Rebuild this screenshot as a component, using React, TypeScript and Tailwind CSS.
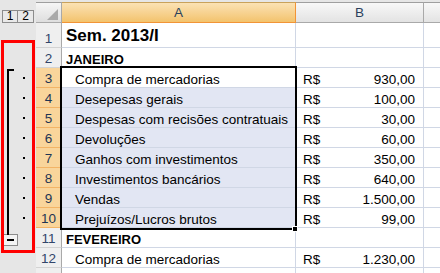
import React from "react";

type Row = {
  n: number;
  a?: string;
  v?: string;
  kind?: "title" | "head" | "item";
  sel?: boolean;
  active?: boolean;
  h: string;
};

const rows: Row[] = [
  { n: 1, a: "Sem. 2013/I", kind: "title", h: "h-[25px]" },
  { n: 2, a: "JANEIRO", kind: "head", h: "h-[20px]" },
  { n: 3, a: "Compra de mercadorias", v: "930,00", kind: "item", sel: true, active: true, h: "h-[20px]" },
  { n: 4, a: "Desepesas gerais", v: "100,00", kind: "item", sel: true, h: "h-[20px]" },
  { n: 5, a: "Despesas com recisões contratuais", v: "30,00", kind: "item", sel: true, h: "h-[20px]" },
  { n: 6, a: "Devoluções", v: "60,00", kind: "item", sel: true, h: "h-[20px]" },
  { n: 7, a: "Ganhos com investimentos", v: "350,00", kind: "item", sel: true, h: "h-[20px]" },
  { n: 8, a: "Investimentos bancários", v: "640,00", kind: "item", sel: true, h: "h-[20px]" },
  { n: 9, a: "Vendas", v: "1.500,00", kind: "item", sel: true, h: "h-[20px]" },
  { n: 10, a: "Prejuízos/Lucros brutos", v: "99,00", kind: "item", sel: true, h: "h-[20px]" },
  { n: 11, a: "FEVEREIRO", kind: "head", h: "h-[20px]" },
  { n: 12, a: "Compra de mercadorias", v: "1.230,00", kind: "item", h: "h-[20px]" },
  { n: 13, h: "h-[20px]" },
];

const SheetRow = ({ row }: { row: Row }) => {
  const aText =
    row.kind === "title"
      ? "pl-[4px] pb-[3px] text-[17px] font-bold"
      : row.kind === "head"
      ? "pl-[4px] pb-[1px] text-[13px] font-bold"
      : "pl-[13px] pb-[1px] text-[13.5px]";

  return (
    <div className={`flex ${row.h}`}>
      {/* outline pane */}
      <div className="w-[36px] bg-[#e6e6e6] flex items-center">
        {row.sel && <div className="ml-[23px] w-[2px] h-[2px] bg-black" />}
        {row.n === 11 && (
          <div className="ml-[2px] mt-[4px] w-[16px] h-[12px] border border-[#8c8c8c] bg-[#f4f4f4] flex items-center justify-center">
            <div className="w-[7px] h-[2px] bg-black" />
          </div>
        )}
      </div>
      {/* row header */}
      <div
        className={`w-[26px] flex items-end justify-center pb-[2px] leading-none text-[13.5px] border-r border-b ${
          row.sel
            ? "bg-[#f9d59b] border-r-[#f29436] border-b-[#f3b466] text-[#1f3553]"
            : "bg-[#efefef] border-r-[#a9a9a9] border-b-[#d3d3d3] text-[#31456a]"
        }`}
      >
        {row.n < 13 ? row.n : ""}
      </div>
      {/* column A */}
      <div
        className={`w-[234px] flex items-end leading-none border-r border-b border-[#d0d7e5] text-black whitespace-nowrap overflow-hidden ${aText} ${
          row.sel && !row.active ? "bg-[#e2e6f3]" : "bg-white"
        }`}
      >
        {row.a}
      </div>
      {/* column B */}
      <div className="w-[128px] flex items-end leading-none pb-[1px] border-r border-b border-[#d0d7e5] bg-white text-[13.5px] text-black pl-[7px] pr-[8px]">
        {row.v && (
          <>
            <span>R$</span>
            <span className="ml-auto">{row.v}</span>
          </>
        )}
      </div>
      {/* column C */}
      <div className="flex-1 border-b border-[#d0d7e5] bg-white" />
    </div>
  );
};

export default function App() {
  return (
    <div
      className="relative w-[440px] h-[273px] overflow-hidden bg-[#e6e6e6]"
      style={{ fontFamily: '"Liberation Sans", Arial, sans-serif' }}
    >
      {/* column header row */}
      <div className="flex h-[23px]">
        <div className="w-[36px] bg-[#e6e6e6] pt-[10px] pl-[2px] flex">
          <div className="w-[16px] h-[13px] border border-[#8c8c8c] bg-[#e9e9e9] text-[12px] leading-[11px] text-black flex items-center justify-center">
            1
          </div>
          <div className="w-[16px] h-[13px] border border-l-0 border-[#8c8c8c] bg-[#e9e9e9] text-[12px] leading-[11px] text-black flex items-center justify-center">
            2
          </div>
        </div>
        <div className="w-[26px] mt-[2px] border-t border-r border-b border-t-[#9f9f9f] border-r-[#a9a9a9] border-b-[#a9a9a9] bg-gradient-to-b from-[#f6f6f6] to-[#dedede] flex items-end justify-end pr-[3px] pb-[2px]">
          <svg width="11" height="11" viewBox="0 0 11 11">
            <polygon points="11,0 11,11 0,11" fill="#a9a9a9" />
          </svg>
        </div>
        <div className="w-[234px] mt-[2px] pt-[2px] border-t border-r border-b border-t-[#c9a25b] border-r-[#f29436] border-b-[#f29436] bg-gradient-to-b from-[#fbe2b4] to-[#f3c36c] flex items-center justify-center text-[13.5px] text-[#2b3f5c]">
          A
        </div>
        <div className="w-[128px] mt-[2px] pt-[2px] border-t border-r border-b border-t-[#9f9f9f] border-r-[#a9a9a9] border-b-[#a9a9a9] bg-gradient-to-b from-[#f8f8f8] to-[#e3e3e3] flex items-center justify-center text-[13.5px] text-[#2b3f5c]">
          B
        </div>
        <div className="flex-1 mt-[2px] border-t border-b border-t-[#9f9f9f] border-b-[#a9a9a9] bg-gradient-to-b from-[#f8f8f8] to-[#e3e3e3]" />
      </div>

      {rows.map((r) => (
        <SheetRow key={r.n} row={r} />
      ))}

      {/* outline bracket */}
      <div className="absolute left-[7px] top-[69px] w-[2px] h-[166px] bg-black" />
      <div className="absolute left-[7px] top-[69px] w-[7px] h-[2px] bg-black" />

      {/* selection border + fill handle */}
      <div className="absolute left-[60px] top-[66px] w-[237px] h-[164px] border-[2px] border-black pointer-events-none" />
      <div className="absolute left-[292px] top-[226px] w-[6px] h-[6px] bg-black border border-white" />

      {/* red annotation box */}
      <div className="absolute left-[1px] top-[40px] w-[34px] h-[213px] border-[3px] border-[#ff0000] pointer-events-none" />
    </div>
  );
}
